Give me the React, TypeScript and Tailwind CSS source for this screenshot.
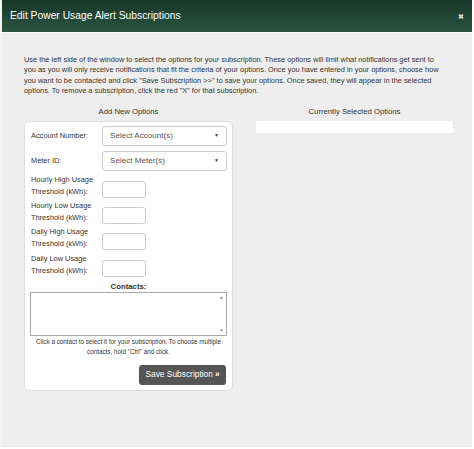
import React from "react";

const font = { fontFamily: '"Liberation Sans", Arial, sans-serif' };

function SelectBox({ placeholder }: { placeholder: string }) {
  return (
    <div className="flex h-[20px] flex-1 items-center justify-between rounded-[3px] border border-[#cccccc] bg-white pl-[7px] pr-[7px]">
      <span className="text-[8.1px] text-[#555555]">{placeholder}</span>
      <span className="text-[5px] leading-none text-[#333333]">▼</span>
    </div>
  );
}

function ThresholdRow({ line1 }: { line1: string }) {
  return (
    <div className="flex h-[24px]">
      <div className="w-[71px] text-[7.4px] leading-[12px] text-[#333333]">
        <div>{line1}</div>
        <div>Threshold (kWh):</div>
      </div>
      <div className="mt-[7px] h-[17px] w-[44px] rounded-[3px] border border-[#cccccc] bg-white" />
    </div>
  );
}

export default function App() {
  return (
    <div className="h-[449px] w-[474px] bg-white" style={font}>
      <div className="flex h-[447px] w-[472px] flex-col border-l-2 border-[#f4f4f4]">
        {/* Header */}
        <div className="flex h-[32px] items-center justify-between bg-gradient-to-b from-[#183629] to-[#2a5642] pl-[8px] pr-[8px]">
          <span className="text-[10.3px] text-white">Edit Power Usage Alert Subscriptions</span>
          <span className="text-[7px] font-bold leading-none text-[#d8d8d8]">✖</span>
        </div>

        {/* Body */}
        <div className="flex-1 border-t border-[#f8f8f8] bg-[#eeeeee] pl-[22px] pr-[19px] pt-[22px]">
          <p className="w-[420px] text-[7.4px] leading-[10.4px] text-[#333333]">
            Use the left side of the window to select the options for your subscription. These options will limit what notifications get sent to
            you as you will only receive notifications that fit the criteria of your options. Once you have entered in your options, choose how
            you want to be contacted and click "Save Subscription &gt;&gt;" to save your options. Once saved, they will appear in the selected
            options. To remove a subscription, click the red "X" for that subscription.
          </p>

          <div className="mt-[9px] flex gap-[23px]">
            {/* Left column */}
            <div className="w-[209px]">
              <div className="text-center text-[7.7px] leading-[12px] text-[#333333]">Add New Options</div>
              <div className="mt-[3px] rounded-[6px] border border-[#dddddd] bg-white px-[5px] pb-[5px] pt-[4px]">
                <div className="flex items-center">
                  <span className="w-[72px] pl-[1px] text-[7.4px] text-[#333333]">Account Number:</span>
                  <SelectBox placeholder="Select Account(s)" />
                </div>
                <div className="mt-[5px] flex items-center">
                  <span className="w-[72px] pl-[1px] text-[7.4px] text-[#333333]">Meter ID:</span>
                  <SelectBox placeholder="Select Meter(s)" />
                </div>

                <div className="mt-[3px] flex flex-col gap-[2.3px] pl-[1px]">
                  <ThresholdRow line1="Hourly High Usage" />
                  <ThresholdRow line1="Hourly Low Usage" />
                  <ThresholdRow line1="Daily High Usage" />
                  <ThresholdRow line1="Daily Low Usage" />
                </div>

                <div className="mt-[4px] text-center text-[7.8px] font-bold leading-[11px] text-[#333333]">Contacts:</div>
                <div className="relative h-[44px] border border-[#aaaaaa] bg-white">
                  <span className="absolute right-[2px] top-[2px] text-[5px] leading-none text-[#999999]">▲</span>
                  <span className="absolute bottom-[2px] right-[2px] text-[5px] leading-none text-[#999999]">▼</span>
                </div>
                <p className="mt-[1px] text-center text-[6.3px] leading-[10px] text-[#333333]">
                  Click a contact to select it for your subscription. To choose multiple
                  <br />
                  contacts, hold "Ctrl" and click.
                </p>
                <div className="mt-[8px] flex justify-end pr-[1px]">
                  <button className="flex h-[20px] w-[87px] items-center justify-center rounded-[3px] bg-[#555555] text-[8.4px] text-white">
                    Save Subscription <span className="ml-[2px] font-bold">»</span>
                  </button>
                </div>
              </div>
            </div>

            {/* Right column */}
            <div className="w-[197px]">
              <div className="text-center text-[7.7px] leading-[12px] text-[#333333]">Currently Selected Options</div>
              <div className="mt-[3px] h-[12px] rounded-[2px] bg-white" />
            </div>
          </div>
        </div>
      </div>
    </div>
  );
}
